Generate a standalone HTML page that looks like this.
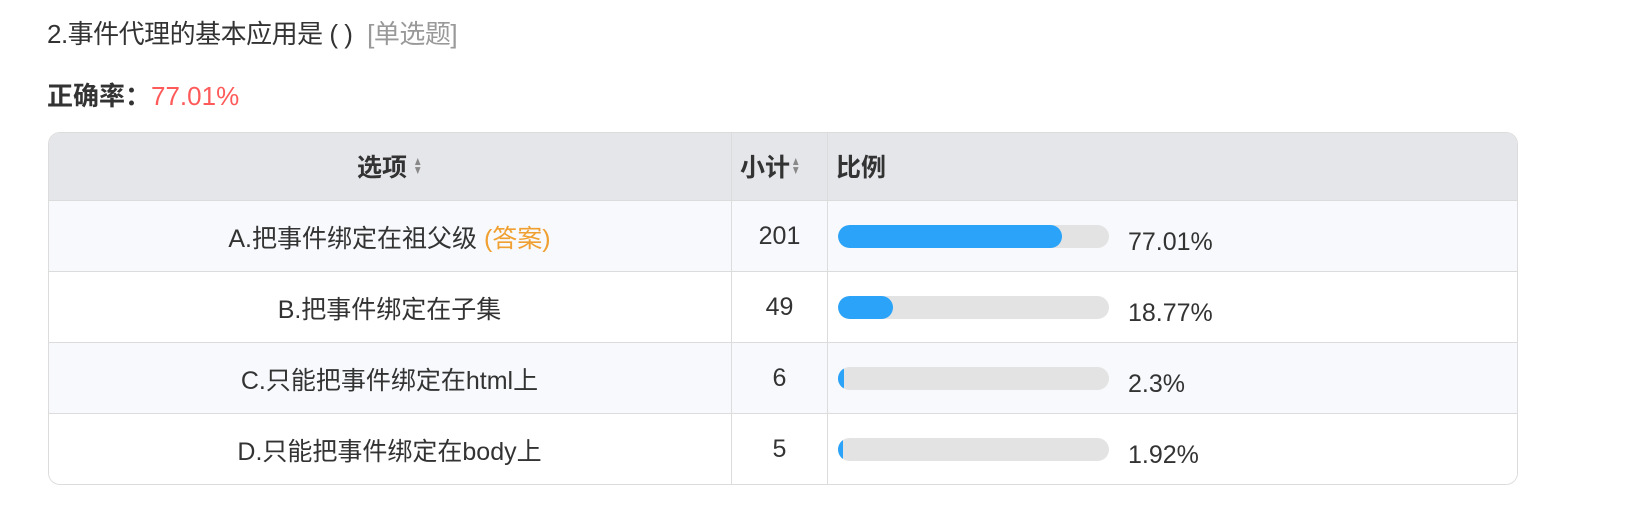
<!DOCTYPE html>
<html><head><meta charset="utf-8"><style>
body{margin:0;width:1632px;height:526px;background:#fff;font-family:"Liberation Sans","Noto Sans CJK SC",sans-serif;color:#333;position:relative;overflow:hidden}
.t{position:absolute;left:47px;top:14px;font-size:26px;color:#333;white-space:nowrap;letter-spacing:-0.5px}
.t span{color:#999;margin-left:8px}
.c{position:absolute;left:47px;top:76px;font-size:26px;font-weight:bold;color:#333;white-space:nowrap}
.c span{color:#ff5a5a;font-weight:normal}
.tb{position:absolute;left:48px;top:132px;width:1468px;height:351px;border:1px solid #dcdcdc;border-radius:12px;overflow:hidden}
.r{position:absolute;left:0;width:1468px;height:71px;border-top:1px solid #dcdcdc;font-size:25px}
.r div{position:absolute;top:0;height:100%;display:flex;align-items:center}
.a{left:0;width:681px;justify-content:center}
.b{left:682px;width:95px;justify-content:center;border-left:1px solid #dcdcdc}
.p{left:778px;width:690px;border-left:1px solid #dcdcdc}
.bar{position:absolute;left:10px;top:24px;width:271px;height:23px;background:#e3e3e3;border-radius:12px;overflow:hidden}
.bar i{display:block;height:100%;background:#2aa3f8;border-radius:12px}
.pc{position:absolute;left:300px;top:26px;line-height:30px}
.s{display:inline-block;width:10px;margin-left:5px;color:#888;font-size:12px;line-height:9px;text-align:center;transform:scaleX(0.8)}
.h{font-weight:bold}
</style></head><body>
<div class="t">2.事件代理的基本应用是 ( ) <span>[单选题]</span></div>
<div class="c">正确率：<span>77.01%</span></div>
<div class="tb">
<div class="r h" style="top:-1px;height:68px;background:#e4e6ea;border-top:none">
<div class="a">选项<span class="s">▲<br>▼</span></div>
<div class="b" style="justify-content:flex-start;padding-left:8px;width:87px">小计<span class="s" style="margin-left:0">▲<br>▼</span></div>
<div class="p" style="padding-left:8px">比例</div></div>
<div class="r" style="top:67px;background:#f7f9fc"><div class="a">A.把事件绑定在祖父级&nbsp;<span style="color:#f0a030">(答案)</span></div><div class="b">201</div><div class="p"><span class="bar"><i style="width:224px"></i></span><span class="pc">77.01%</span></div></div>
<div class="r" style="top:138px;background:#fff"><div class="a">B.把事件绑定在子集</div><div class="b">49</div><div class="p"><span class="bar"><i style="width:55px"></i></span><span class="pc">18.77%</span></div></div>
<div class="r" style="top:209px;background:#f7f9fc"><div class="a">C.只能把事件绑定在html上</div><div class="b">6</div><div class="p"><span class="bar"><i style="width:6px;border-radius:3px"></i></span><span class="pc">2.3%</span></div></div>
<div class="r" style="top:280px;background:#fff"><div class="a">D.只能把事件绑定在body上</div><div class="b">5</div><div class="p"><span class="bar"><i style="width:5px;border-radius:3px"></i></span><span class="pc">1.92%</span></div></div>
</div>
</body></html>
